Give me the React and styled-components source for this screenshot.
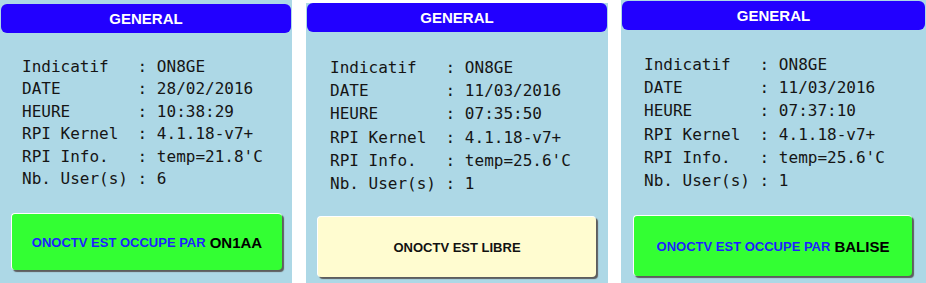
import React from 'react'
import styled, { createGlobalStyle } from 'styled-components'

const Global = createGlobalStyle`
  body{
    margin:0;
    background:#fff;
  }
`

const Page = styled.div`
  display:flex;
  align-items:flex-start;
  width:926px;
  height:283px;
  overflow:hidden;
`

const Panel = styled.div`
  display:flex;
  flex-direction:column;
  box-sizing:border-box;
  width:${(p) => p.w}px;
  height:${(p) => 283 - p.top}px;
  margin-top:${(p) => p.top}px;
  margin-left:${(p) => p.gap}px;
  padding:${(p) => p.padTop}px 1px 0 1px;
  background:#add8e6;
`

const Header = styled.div`
  height:29px;
  display:flex;
  align-items:center;
  justify-content:center;
  background:#2200ff;
  border-radius:6px;
  color:#fff;
  font-family:"Liberation Sans", Arial, sans-serif;
  font-weight:bold;
  font-size:15px;
`

const Infos = styled.div`
  margin-top:${(p) => p.offset}px;
  padding-left:${(p) => p.indent}px;
  font-family:"DejaVu Sans Mono", monospace;
  font-size:16px;
  line-height:${(p) => p.pitch}px;
  color:#151515;
  white-space:pre;
`

const Status = styled.div`
  display:flex;
  align-items:center;
  justify-content:center;
  box-sizing:border-box;
  height:${(p) => p.h}px;
  margin:auto ${(p) => p.right}px ${(p) => p.bottom}px ${(p) => p.left}px;
  background:${(p) => (p.busy ? '#33ff33' : '#fffcd0')};
  border-top:1px solid #fff;
  border-left:1px solid #fff;
  border-radius:4px;
  box-shadow:2px 2px 1px #5d5d5d;
  font-family:"Liberation Sans", Arial, sans-serif;
  font-weight:bold;
  font-size:13px;
  color:#111;
`

const Who = styled.span`
  color:#1d1dff;
  margin-right:4px;
`

const Name = styled.span`
  color:#000;
  font-size:15px;
`

const panels = [
  {
    w: 292, gap: 0, top: 0, padTop: 4, offset: 23, pitch: 22.4, indent: 21,
    date: '28/02/2016', time: '10:38:29', temp: '21.8', users: '6',
    by: 'ON1AA', h: 57, left: 10, right: 9, bottom: 13,
  },
  {
    w: 302, gap: 14, top: 3, padTop: 0, offset: 24, pitch: 23.2, indent: 23,
    date: '11/03/2016', time: '07:35:50', temp: '25.6', users: '1',
    by: null, h: 61, left: 10, right: 11, bottom: 6,
  },
  {
    w: 305, gap: 13, top: 0, padTop: 1, offset: 23, pitch: 23.2, indent: 22,
    date: '11/03/2016', time: '07:37:10', temp: '25.6', users: '1',
    by: 'BALISE', h: 61, left: 11, right: 13, bottom: 7,
  },
]

function Card({ p }) {
  const rows = [
    ['Indicatif', 'ON8GE'],
    ['DATE', p.date],
    ['HEURE', p.time],
    ['RPI Kernel', '4.1.18-v7+'],
    ['RPI Info.', `temp=${p.temp}'C`],
    ['Nb. User(s)', p.users],
  ]
  return (
    <Panel w={p.w} gap={p.gap} top={p.top} padTop={p.padTop}>
      <Header>GENERAL</Header>
      <Infos offset={p.offset} pitch={p.pitch} indent={p.indent}>
        {rows.map(([k, v]) => (
          <div key={k}>{k.padEnd(12, ' ')}: {v}</div>
        ))}
      </Infos>
      <Status busy={!!p.by} h={p.h} left={p.left} right={p.right} bottom={p.bottom}>
        {p.by ? (
          <>
            <Who>ONOCTV EST OCCUPE PAR</Who>
            <Name>{p.by}</Name>
          </>
        ) : (
          'ONOCTV EST LIBRE'
        )}
      </Status>
    </Panel>
  )
}

export default function App() {
  return (
    <>
      <Global />
      <Page>
        {panels.map((p, i) => (
          <Card key={i} p={p} />
        ))}
      </Page>
    </>
  )
}
